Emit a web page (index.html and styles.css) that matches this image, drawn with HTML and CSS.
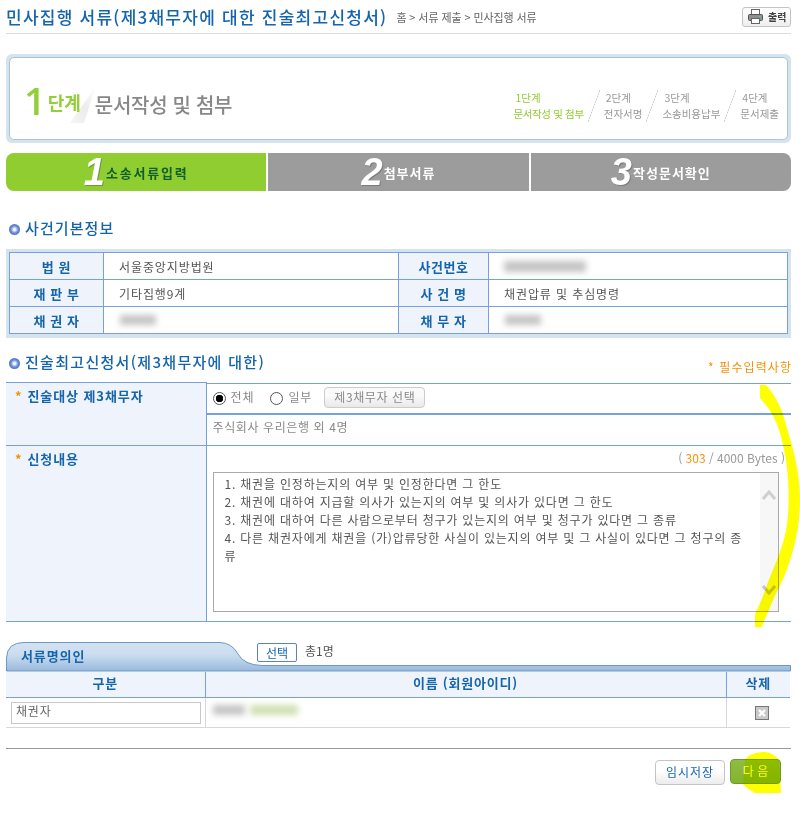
FILE: index.html
```html
<!DOCTYPE html>
<html lang="ko">
<head>
    <meta charset="UTF-8">
    <title>민사집행 서류</title>
    <link rel="stylesheet" href="styles.css">
</head>
<body>
    <div class="page">
        <div class="head">
            <h1>민사집행 서류(제3채무자에 대한 진술최고신청서)</h1>
            <span class="crumb">홈 &gt; 서류 제출 &gt; 민사집행 서류</span>
            <button class="print-btn">
                <svg width="15" height="15" viewBox="0 0 15 15">
                    <rect x="3.5" y="0.5" width="8" height="5" fill="#fff" stroke="#666"/>
                    <rect x="0.5" y="5.5" width="14" height="6" rx="1" fill="#8a9096" stroke="#555"/>
                    <rect x="3.5" y="9.5" width="8" height="5" fill="#fff" stroke="#666"/>
                    <rect x="11" y="7" width="2" height="1" fill="#5fd35f"/>
                </svg>
                출력
            </button>
        </div>

        <div class="stepbox">
            <div class="stepbox-inner">
                <div class="step-now">
                    <span class="step-num">1</span>
                    <span class="step-word">단계</span>
                    <svg class="fold" width="30" height="38" viewBox="0 0 30 38">
                        <defs>
                            <linearGradient id="foldFill" x1="0" y1="1" x2="1" y2="0">
                                <stop offset="0" stop-color="#f6f6f6"/>
                                <stop offset="0.5" stop-color="#ececec"/>
                                <stop offset="1" stop-color="#ffffff"/>
                            </linearGradient>
                        </defs>
                        <polygon points="0,37 26,0 14,37" fill="url(#foldFill)"/>
                    </svg>
                    <span class="step-title">문서작성 및 첨부</span>
                </div>
                <div class="step-list">
                    <div class="step-item on"><span>1단계</span><span class="tight">문서작성 및 첨부</span></div>
                    <i class="slash"></i>
                    <div class="step-item"><span>2단계</span><span>전자서명</span></div>
                    <i class="slash"></i>
                    <div class="step-item"><span>3단계</span><span>소송비용납부</span></div>
                    <i class="slash"></i>
                    <div class="step-item"><span>4단계</span><span>문서제출</span></div>
                </div>
            </div>
        </div>

        <div class="tabs">
            <div class="tab on"><b>1</b><span>소송서류입력</span></div>
            <div class="tab"><b>2</b><span>첨부서류</span></div>
            <div class="tab"><b>3</b><span>작성문서확인</span></div>
        </div>

        <h2 class="sec first"><i class="dot"></i>사건기본정보</h2>
        <div class="info-wrap">
            <table class="info">
                <colgroup><col class="c1"><col class="c2"><col class="c3"><col></colgroup>
                <tr>
                    <th>법 원</th><td>서울중앙지방법원</td>
                    <th>사건번호</th><td><div class="blur w-case"></div></td>
                </tr>
                <tr>
                    <th>재 판 부</th><td>기타집행9계</td>
                    <th>사 건 명</th><td>채권압류 및 추심명령</td>
                </tr>
                <tr>
                    <th>채 권 자</th><td><div class="blur w-name"></div></td>
                    <th>채 무 자</th><td><div class="blur w-name"></div></td>
                </tr>
            </table>
        </div>

        <div class="sec-row">
            <h2 class="sec"><i class="dot"></i>진술최고신청서(제3채무자에 대한)</h2>
            <span class="req">* 필수입력사항</span>
        </div>
        <table class="form">
            <colgroup><col class="f1"><col></colgroup>
            <tr>
                <th rowspan="2"><em>*</em>진술대상 제3채무자</th>
                <td class="radios">
                    <i class="radio checked"></i><span>전체</span>
                    <i class="radio"></i><span>일부</span>
                    <button class="gray-btn">제3채무자 선택</button>
                </td>
            </tr>
            <tr><td class="names">주식회사 우리은행 외 4명</td></tr>
            <tr>
                <th><em>*</em>신청내용</th>
                <td class="content">
                    <div class="bytes">( <span>303</span> / 4000 Bytes )</div>
                    <div class="textbox">
                        <div class="textbox-text">1. 채권을 인정하는지의 여부 및 인정한다면 그 한도<br>2. 채권에 대하여 지급할 의사가 있는지의 여부 및 의사가 있다면 그 한도<br>3. 채권에 대하여 다른 사람으로부터 청구가 있는지의 여부 및 청구가 있다면 그 종류<br>4. 다른 채권자에게 채권을 (가)압류당한 사실이 있는지의 여부 및 그 사실이 있다면 그 청구의 종<br>류</div>
                        <div class="scroll">
                            <svg width="14" height="10" viewBox="0 0 14 10"><path d="M1 9 L7 2 L13 9" fill="none" stroke="#cfcfcf" stroke-width="3"/></svg>
                            <svg width="14" height="10" viewBox="0 0 14 10"><path d="M1 1 L7 8 L13 1" fill="none" stroke="#c4c4c4" stroke-width="3"/></svg>
                        </div>
                    </div>
                </td>
            </tr>
        </table>

        <div class="signer-bar">
            <svg class="signer-shape" width="785" height="30" viewBox="0 0 785 30">
                <defs>
                    <linearGradient id="tabFill" x1="0" y1="0" x2="0" y2="1">
                        <stop offset="0" stop-color="#d4e3f1"/>
                        <stop offset="0.45" stop-color="#c9dcee"/>
                        <stop offset="1" stop-color="#98b9de"/>
                    </linearGradient>
                </defs>
                <path d="M0.5 29 V16 Q1 0.5 18 0.5 H214 Q226 1 232 12 Q238 23 256 23.5 H784.5 V29 Z" fill="url(#tabFill)" stroke="#6b97c2"/>
            </svg>
            <span class="signer-title">서류명의인</span>
            <button class="pick-btn">선택</button>
            <span class="count">총1명</span>
        </div>
        <table class="signers">
            <colgroup><col class="s1"><col><col class="s3"></colgroup>
            <tr><th>구분</th><th>이름 (회원아이디)</th><th>삭제</th></tr>
            <tr>
                <td><div class="role">채권자</div></td>
                <td><div class="name-blurs"><div class="blur w-first"></div><div class="blur w-id"></div></div></td>
                <td class="del">
                    <svg width="14" height="14" viewBox="0 0 14 14">
                        <rect x="0.5" y="0.5" width="13" height="13" fill="#c9c9c9" stroke="#777"/>
                        <path d="M4 4 L10 10 M10 4 L4 10" stroke="#fff" stroke-width="2.4"/>
                    </svg>
                </td>
            </tr>
        </table>

        <div class="foot">
            <button class="save-btn">임시저장</button>
            <button class="next-btn">다 음</button>
        </div>
    </div>

    <!-- marker scribble drawn over the screenshot -->
    <svg class="marker" width="800" height="813" viewBox="0 0 800 813">
        <path fill="#ffff00" d="M760 385 L766 385 C775 395 783 410 786 425 C792 445 800 470 800 500 C800 525 795 545 790 560 C785 578 776 592 771 605 C767 615 763 622 762 627 L755 627 L755 614 C760 604 765 592 768 582 C776 562 784 545 787 525 C790 500 789 470 783 445 C779 425 772 412 765 404 L760 398 Z"/>
        <path fill="#ffff00" d="M745 760 C748 755 755 752 765 752 C772 753 776 756 779 760 L781 793 L755 793 C750 790 745 787 743 784 Z"/>
    </svg>
</body>
</html>
```

FILE: styles.css
```css
* {
    box-sizing: border-box;
}
html, body {
    margin: 0;
    padding: 0;
    background: #fff;
}
body {
    position: relative;
    height: 813px;
    overflow: hidden;
    font-family: "Noto Sans CJK KR", "Noto Sans", sans-serif;
    font-size: 12px;
    color: #555;
}
button {
    font-family: inherit;
    cursor: pointer;
}
.page {
    width: 785px;
    margin-left: 6px;
}
.head {
    display: flex;
    align-items: center;
    height: 34px;
    border-bottom: 1px solid #dcdcdc;
}
.head h1 {
    margin: 0;
    font-size: 17px;
    font-weight: 500;
    color: #1464ae;
    letter-spacing: 1.25px;
    line-height: 28px;
}
.crumb {
    margin-left: 9px;
    font-size: 11px;
    letter-spacing: -0.1px;
    color: #666;
}
.print-btn {
    display: flex;
    align-items: center;
    gap: 5px;
    margin-left: auto;
    width: 49px;
    height: 20px;
    padding: 0 0 0 5px;
    border: 1px solid #c4c4c4;
    border-radius: 3px;
    background: linear-gradient(#fff, #eee);
    font-size: 10px;
    font-weight: 700;
    color: #444;
}
.stepbox {
    margin-top: 20px;
    height: 89px;
    padding: 3px;
    border-radius: 6px;
    background: #d5e3ec;
}
.stepbox-inner {
    display: flex;
    justify-content: space-between;
    align-items: flex-end;
    height: 83px;
    padding: 0 8px 17px 14px;
    border: 1px solid #a9c6d8;
    border-radius: 5px;
    background: #fff;
}
.step-now {
    display: flex;
    align-items: flex-end;
    position: relative;
    margin-bottom: 2px;
}
.step-num {
    font-family: "Open Sans", sans-serif;
    font-weight: 600;
    font-size: 38px;
    line-height: 34px;
    color: #92cf38;
    margin: 0 2px 3px 0;
}
.step-word {
    position: relative;
    z-index: 1;
    font-size: 18px;
    line-height: 26px;
    font-weight: 700;
    color: #92cf38;
    letter-spacing: 0;
    margin-bottom: 5px;
}
.fold {
    margin: 0 -5px -4px -11px;
}
.step-title {
    position: relative;
    font-size: 20px;
    line-height: 28px;
    font-weight: 500;
    color: #888;
    letter-spacing: -0.3px;
    margin-bottom: 1px;
}
.step-list {
    display: flex;
    align-items: flex-end;
}
.step-item {
    display: flex;
    flex-direction: column;
    align-items: flex-start;
    font-size: 10.5px;
    line-height: 16px;
    color: #999;
}
.step-item span:first-child {
    padding-left: 2px;
}
.step-item .tight {
    letter-spacing: -0.35px;
}
.step-item.on {
    color: #90cd30;
}
.slash {
    display: block;
    width: 12px;
    height: 32px;
    margin: 0 4px;
    background: linear-gradient(to bottom right, transparent calc(50% - 0.6px), #c8c8c8, transparent calc(50% + 0.6px));
}
.tabs {
    display: flex;
    gap: 2px;
    margin-top: 10px;
    height: 38px;
}
.tab {
    display: flex;
    flex: 1;
    justify-content: center;
    align-items: center;
    background: #9c9c9c;
    color: #fff;
    font-size: 13px;
    font-weight: 700;
    letter-spacing: 1px;
}
.tab:first-child {
    border-radius: 8px 0 0 8px;
}
.tab:last-child {
    border-radius: 0 8px 8px 0;
}
.tab.on {
    background: #90cd30;
    color: #0e5f2c;
    letter-spacing: 1.8px;
}
.tab b {
    font-family: "Liberation Sans", sans-serif;
    font-style: italic;
    font-size: 38px;
    line-height: 38px;
    color: #fff;
    margin-right: 1px;
    letter-spacing: 0;
    text-shadow: 1px 1px 0 rgba(90, 90, 90, 0.5);
}
.sec {
    display: flex;
    align-items: center;
    margin: 0;
    font-size: 15px;
    line-height: 20px;
    font-weight: 500;
    color: #1464ae;
    letter-spacing: 1.1px;
}
.sec-row .sec {
    letter-spacing: 1.3px;
}
.sec.first {
    margin-top: 27px;
}
.dot {
    display: block;
    width: 11px;
    height: 11px;
    margin: 2px 5px 0 3px;
    border-radius: 50%;
    background: radial-gradient(circle at 50% 50%, #eef4ff 0 14%, #6c8fd8 45%, #34559f 100%);
}
.info-wrap {
    margin-top: 11px;
    padding: 3px 3px 4px;
    background: #d5e3ec;
}
.info {
    width: 779px;
    border-collapse: collapse;
    table-layout: fixed;
    background: #fff;
}
.c1 { width: 94px; }
.c2 { width: 295px; }
.c3 { width: 90px; }
.info th, .info td {
    height: 27px;
    padding: 0;
    border: 1px solid #76a0df;
    font-size: 12px;
    font-weight: 400;
}
.info th {
    background: #eff4fc;
    color: #1464ae;
    font-size: 13px;
    font-weight: 700;
    letter-spacing: 0.6px;
}
.info td {
    padding-left: 15px;
    color: #555;
    letter-spacing: 0.9px;
}
.blur {
    background: #c4c4c4;
    filter: blur(3px);
    height: 10px;
}
.w-case { width: 82px; height: 11px; }
.w-name { width: 36px; margin-left: 1px; }
.sec-row {
    display: flex;
    justify-content: space-between;
    align-items: flex-end;
    margin-top: 13px;
    height: 31px;
}
.sec-row .sec {
    margin-bottom: 10px;
}
.req {
    font-size: 12px;
    color: #f69200;
    letter-spacing: 1.1px;
    margin-right: -1.1px;
    margin-bottom: 7px;
}
.form {
    width: 785px;
    border-collapse: collapse;
    table-layout: fixed;
}
.f1 { width: 200px; }
.form th, .form td {
    padding: 0;
    border-top: 1px solid #76a0df;
    border-bottom: 1px solid #76a0df;
}
.form th {
    vertical-align: top;
    text-align: left;
    padding: 3px 0 0 9px;
    background: #eff4fc;
    border-right: 1px solid #76a0df;
    color: #1464ae;
    font-size: 13px;
    font-weight: 700;
    letter-spacing: 0.9px;
}
.form th em {
    color: #f69200;
    font-style: normal;
    margin-right: 5px;
}
.radios {
    display: flex;
    align-items: center;
    height: 31px;
    padding-left: 6px !important;
    color: #888;
}
.radios span {
    margin: -3px 16px 0 5px;
    letter-spacing: 0.9px;
}
.radio {
    display: block;
    width: 13px;
    height: 13px;
    border: 1px solid #555;
    border-radius: 50%;
    background: #fff;
}
.radio.checked {
    background: radial-gradient(circle, #000 0 3.5px, #fff 4px);
}
.gray-btn {
    height: 21px;
    width: 101px;
    margin-left: -4px;
    margin-top: -1px;
    padding: 0 0 3px;
    border: 1px solid #ccc;
    border-radius: 4px;
    background: linear-gradient(#fafafa 40%, #e9e9e9);
    color: #888;
    font-size: 12px;
    letter-spacing: 0.6px;
}
.names {
    height: 31px;
    padding-left: 6px !important;
    padding-bottom: 6px !important;
    color: #888;
    letter-spacing: 0.6px;
}
.content {
    height: 176px;
    padding: 0 12px 9px 6px !important;
}
.bytes {
    height: 26px;
    padding: 3px 0 0 0;
    margin-right: -6px;
    text-align: right;
    color: #999;
}
.bytes span {
    color: #f69200;
}
.textbox {
    display: flex;
    height: 140px;
    border: 1px solid #aaa;
}
.textbox-text {
    flex: 1;
    padding: 2px 0 0 11px;
    line-height: 18px;
    white-space: nowrap;
    color: #555;
    letter-spacing: 0.8px;
}
.scroll {
    display: flex;
    flex-direction: column;
    justify-content: space-between;
    align-items: center;
    width: 18px;
    padding: 17px 0 16px;
    background: #f7f7f7;
}
.signer-bar {
    position: relative;
    display: flex;
    align-items: flex-start;
    margin-top: 20px;
    height: 30px;
}
.signer-shape {
    position: absolute;
    top: 0;
    left: 0;
}
.signer-title {
    position: relative;
    margin: 4px 0 0 15px;
    width: 236px;
    color: #1464ae;
    font-size: 13px;
    font-weight: 700;
    letter-spacing: 0.9px;
}
.pick-btn {
    position: relative;
    width: 40px;
    height: 19px;
    margin-top: 1px;
    padding: 0 0 3px;
    border: 1px solid #5b85b0;
    border-radius: 2px;
    background: #fff;
    color: #1464ae;
    font-size: 12px;
}
.count {
    position: relative;
    margin-left: 8px;
    color: #555;
}
.signers {
    width: 784px;
    border-collapse: collapse;
    table-layout: fixed;
}
.s1 { width: 199px; }
.s3 { width: 64px; }
.signers th {
    height: 26px;
    padding: 0 0 4px;
    background: #eff4fc;
    border-bottom: 1px solid #76a0df;
    border-left: 1px solid #76a0df;
    color: #1464ae;
    font-size: 13px;
    letter-spacing: 0.8px;
}
.signers th:first-child {
    border-left: 0;
}
.signers td {
    height: 30px;
    padding: 0;
    border-bottom: 1px solid #d8d8d8;
    border-left: 1px solid #d8d8d8;
}
.signers td:first-child {
    border-left: 0;
    padding-left: 5px;
}
.role {
    width: 190px;
    height: 22px;
    padding: 0 0 0 4px;
    border: 1px solid #c8c8c8;
    line-height: 16px;
    color: #666;
    letter-spacing: 0.8px;
}
.name-blurs {
    display: flex;
    gap: 5px;
    margin: -5px 0 0 7px;
}
.w-first { width: 32px; }
.w-id { width: 48px; background: #cfe0b0; }
.del {
    text-align: center;
}
.del svg {
    display: block;
    margin: 0 auto 0 28px;
}
.foot {
    display: flex;
    align-items: flex-start;
    justify-content: flex-end;
    gap: 5px;
    margin-top: 20px;
    padding: 10px 10px 0 0;
    border-top: 1px solid #999;
}
.save-btn {
    width: 70px;
    height: 25px;
    margin-top: 1px;
    padding: 0 0 3px;
    border: 1px solid #c4c4c4;
    border-radius: 4px;
    background: linear-gradient(#fff 40%, #ececec);
    color: #1464ae;
    font-size: 12px;
    letter-spacing: 0.9px;
}
.next-btn {
    width: 51px;
    height: 25px;
    padding: 0 0 3px;
    border: 1px solid #6f9a28;
    border-radius: 4px;
    background: linear-gradient(#8fbc45, #84b42c);
    color: #fff;
    font-size: 12px;
}
.marker {
    position: absolute;
    top: 0;
    left: 0;
    mix-blend-mode: multiply;
    pointer-events: none;
}
```
